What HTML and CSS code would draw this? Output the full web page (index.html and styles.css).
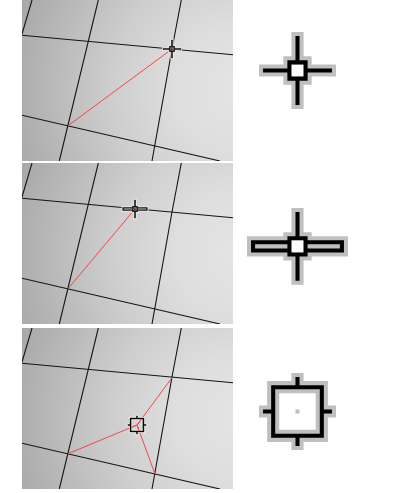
FILE: index.html
```
<!DOCTYPE html>
<html lang="en">
<head>
<meta charset="utf-8">
<meta name="viewport" content="width=device-width, initial-scale=1">
<title>Cursor shapes</title>
<link rel="stylesheet" href="styles.css">
</head>
<body>
<svg class="defs" width="0" height="0" aria-hidden="true">
  <defs>
    <radialGradient id="shade" gradientUnits="userSpaceOnUse" cx="215" cy="90" r="250">
      <stop offset="0" stop-color="#e4e4e4"/>
      <stop offset="0.25" stop-color="#dedede"/>
      <stop offset="0.5" stop-color="#cecece"/>
      <stop offset="0.75" stop-color="#b8b8b8"/>
      <stop offset="1" stop-color="#a2a2a2"/>
    </radialGradient>
    <g id="mesh">
      <rect width="211" height="161" fill="url(#shade)"/>
      <path class="wire" d="M10 0L0 34M76.3 0L37.3 161M159.3 0L150 49L130 161M0 35.2L211 54.8M0 115.3L133 146L198 161"/>
    </g>
    <!-- Cursors are drawn on a grid of one unit per cursor pixel -->
    <g id="vertex">
      <path class="halo" fill-rule="evenodd" d="M8 0h3v6h2v2h6v3h-6v2h-2v6h-3v-6h-2v-2h-6v-3h6v-2h2zM8 8v3h3v-3z"/>
      <path class="ink" fill-rule="evenodd" d="M9 1h1v6h2v2h6v1h-6v2h-2v6h-1v-6h-2v-2h-6v-1h6v-2h2zM8 8v3h3v-3z"/>
    </g>
    <g id="edge">
      <path class="halo" fill-rule="evenodd" d="M11 0h3v6h2v1h9v5h-9v1h-2v6h-3v-6h-2v-1h-9v-5h9v-1h2zM11 8v3h3v-3z"/>
      <path class="ink" fill-rule="evenodd" d="M12 1h1v6h2v1h9v3h-9v1h-2v6h-1v-6h-2v-1h-9v-3h9v-1h2zM11 8v3h3v-3zM2 9v1h8v-1zM15 9v1h8v-1z"/>
    </g>
    <g id="face">
      <path class="halo" fill-rule="evenodd" d="M8 0h3v2h6v6h2v3h-2v6h-6v2h-3v-2h-6v-6h-2v-3h2v-6h6zM5 5v9h9v-9z"/>
      <path class="halo" d="M9 9h1v1h-1z"/>
      <path class="ink" fill-rule="evenodd" d="M9 1h1v2h6v6h2v1h-2v6h-6v2h-1v-2h-6v-6h-2v-1h2v-6h6zM4 4v11h11v-11z"/>
    </g>
  </defs>
</svg>
<main class="guide">
  <section class="row">
    <svg class="view" viewBox="0 0 211 161" role="img" aria-label="Cursor over a vertex">
      <use href="#mesh"/>
      <path class="cut" d="M46 125.7L150 49"/>
      <g class="small" transform="translate(150 49) scale(1.07)">
        <use href="#vertex" x="-9.5" y="-9.5"/>
        <path class="core" d="M-1.5 -1.5h3v3h-3z"/>
        <path class="spot" d="M-1 -0.5h1.5v1.5h-1.5z"/>
      </g>
    </svg>
    <div class="shape shape-top">
      <svg class="cursor" viewBox="0 0 19 19" role="img" aria-label="Vertex cursor"><use href="#vertex"/></svg>
    </div>
  </section>
  <section class="row">
    <svg class="view" viewBox="0 0 211 161" role="img" aria-label="Cursor over an edge">
      <use href="#mesh"/>
      <path class="cut" d="M46 125.7L113 46"/>
      <g class="small" transform="translate(113 46) scale(1.07)">
        <use href="#edge" x="-12.5" y="-9.5"/>
        <path class="core" d="M-10.5 -0.8h8v1.6h-8zM2.5 -0.8h8v1.6h-8zM-1.5 -1.5h3v3h-3z"/>
        <path class="spot" d="M-1 -0.5h1.5v1.5h-1.5z"/>
      </g>
    </svg>
    <div class="shape">
      <svg class="cursor cursor-wide" viewBox="0 0 25 19" role="img" aria-label="Edge cursor"><use href="#edge"/></svg>
    </div>
  </section>
  <section class="row row-last">
    <svg class="view" viewBox="0 0 211 161" role="img" aria-label="Cursor over a face">
      <use href="#mesh"/>
      <path class="cut" d="M46 125.7L115 97L150.3 49.3M115 97L133 146"/>
      <g class="small" transform="translate(115 97) scale(1.07)">
        <use href="#face" x="-9.5" y="-9.5"/>
      </g>
      <path class="cut" d="M109.5 99.3L115 97L119.5 91M115 97L117.2 103"/>
    </svg>
    <div class="shape">
      <svg class="cursor" viewBox="0 0 19 19" role="img" aria-label="Face cursor"><use href="#face"/></svg>
    </div>
  </section>
</main>
</body>
</html>
```
FILE: styles.css
```
body {
  margin: 0;
  background: #fff;
  font-family: "Liberation Sans", sans-serif;
}

.defs {
  position: absolute;
}

.guide {
  display: flex;
  flex-direction: column;
  gap: 2px;
  padding-left: 22px;
}

.row {
  display: flex;
  align-items: flex-start;
  gap: 14px;
}

.row-last {
  margin-top: 2px;
}

.view {
  display: block;
  flex: none;
  width: 211px;
}

.shape {
  display: flex;
  justify-content: center;
  flex: none;
  width: 101px;
  padding-top: 45px;
}

.shape-top {
  padding-top: 32px;
}

.cursor {
  display: block;
  width: 77px;
}

.cursor-wide {
  width: 101px;
}

.wire {
  fill: none;
  stroke: #141414;
  stroke-width: 1.1;
}

.cut {
  fill: none;
  stroke: #f04848;
  stroke-width: 1;
}

.halo {
  fill: var(--halo, #bfbfbf);
}

.ink {
  fill: #000;
  stroke: #000;
  stroke-width: var(--ink-edge, 0);
}

.small {
  --halo: #f4f4f4;
  --ink-edge: 0.4;
}

.core {
  fill: #808080;
}

.spot {
  fill: #5a2626;
}
```
